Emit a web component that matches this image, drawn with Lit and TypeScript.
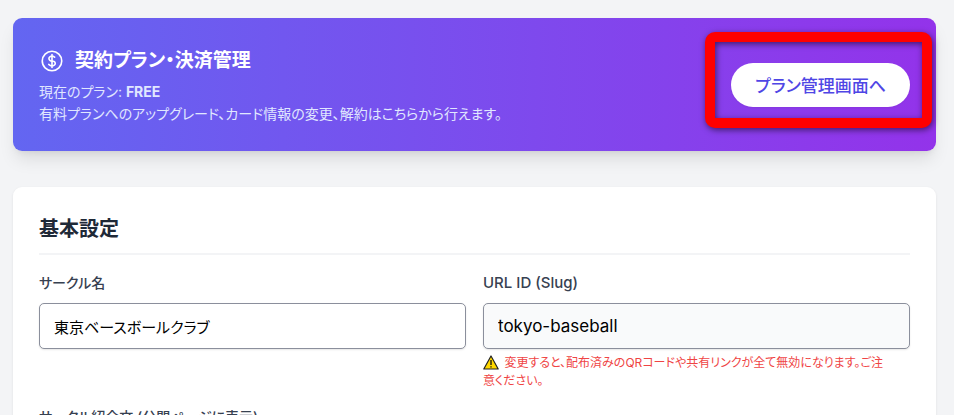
import { LitElement, html, css } from "lit";
import { customElement } from "lit/decorators.js";

@customElement("plan-banner")
class PlanBanner extends LitElement {
  static styles = css`
    :host {
      display: block;
    }
    .banner {
      display: flex;
      align-items: center;
      justify-content: space-between;
      gap: 16px;
      padding: 26px;
      border-radius: 9px;
      color: #fff;
      background: linear-gradient(to right, #6366f1, #9333ea);
      box-shadow: 0 11px 17px -3px rgb(0 0 0 / 0.1), 0 4px 7px -4px rgb(0 0 0 / 0.1);
    }
    .title {
      display: flex;
      align-items: center;
      gap: 10px;
      margin: 0 0 4px;
      font-size: 19px;
      line-height: 33px;
      font-weight: 700;
    }
    .icon {
      width: 26px;
      height: 26px;
      flex: none;
    }
    .text {
      margin: 0;
      font-size: 14px;
      line-height: 22px;
      color: #e0e7ff;
    }
    .action {
      position: relative;
      flex: none;
    }
    .button {
      display: block;
      height: 44px;
      padding: 0 24px;
      border: 0;
      border-radius: 22px;
      background: #fff;
      color: #4f46e5;
      font: inherit;
      font-size: 17px;
      font-weight: 500;
      font-feature-settings: inherit;
      box-shadow: 0 1px 2px rgb(0 0 0 / 0.05);
    }
    .highlight {
      position: absolute;
      inset: -31px -22px -21px -26px;
      border: 10px solid #f00;
      border-radius: 10px;
      pointer-events: none;
      filter: drop-shadow(1px 2px 3px rgb(0 0 0 / 0.55));
    }
  `;

  render() {
    return html`
      <section class="banner">
        <div>
          <h2 class="title">
            <svg class="icon" viewBox="0 0 24 24" fill="none" stroke="currentColor" stroke-width="1.5" stroke-linecap="round" stroke-linejoin="round" aria-hidden="true">
              <path d="M12 6v12m-3-2.818.879.659c1.171.879 3.07.879 4.242 0 1.172-.879 1.172-2.303 0-3.182C13.536 12.219 12.768 12 12 12c-.725 0-1.45-.22-2.003-.659-1.106-.879-1.106-2.303 0-3.182s2.9-.879 4.006 0l.415.33M21 12a9 9 0 1 1-18 0 9 9 0 0 1 18 0Z" />
            </svg>
            契約プラン・決済管理
          </h2>
          <p class="text">現在のプラン: <strong>FREE</strong></p>
          <p class="text">有料プランへのアップグレード、カード情報の変更、解約はこちらから行えます。</p>
        </div>
        <div class="action">
          <button class="button" type="button">プラン管理画面へ</button>
          <div class="highlight"></div>
        </div>
      </section>
    `;
  }
}

@customElement("basic-settings")
class BasicSettings extends LitElement {
  static styles = css`
    :host {
      display: block;
    }
    .card {
      padding: 26px;
      border-radius: 9px;
      background: #fff;
      box-shadow: 0 1px 3px rgb(0 0 0 / 0.08);
    }
    .heading {
      margin: 0 0 17px;
      padding-bottom: 8px;
      border-bottom: 2px solid #f3f4f6;
      font-size: 20px;
      line-height: 32px;
      font-weight: 700;
      color: #1f2937;
    }
    .grid {
      display: grid;
      grid-template-columns: 1fr 1fr;
      gap: 17px;
      margin-bottom: 16px;
    }
    .label {
      display: block;
      margin-bottom: 9px;
      font-size: 14px;
      line-height: 22px;
      font-weight: 500;
      color: #374151;
    }
    .label.latin {
      font-size: 15px;
    }
    .input {
      display: block;
      box-sizing: border-box;
      width: 100%;
      height: 46px;
      padding: 0 14px;
      border: 1px solid #8b8f9c;
      border-radius: 5px;
      background: #fff;
      color: #000;
      font: inherit;
      font-size: 15px;
      font-feature-settings: inherit;
      box-shadow: 0 1px 2px rgb(0 0 0 / 0.1);
    }
    .input.latin {
      font-size: 17px;
      background: #f9fafb;
    }
    .area {
      height: 110px;
      padding: 9px 14px;
    }
    .note {
      margin: 5px 0 0;
      padding-right: 20px;
      font-size: 12px;
      line-height: 18px;
      color: #ef4444;
    }
    .warn {
      width: 16px;
      height: 15px;
      margin-right: 2px;
      vertical-align: -3px;
    }
  `;

  render() {
    return html`
      <section class="card">
        <h2 class="heading">基本設定</h2>
        <div class="grid">
          <div>
            <label class="label" for="name">サークル名</label>
            <input class="input" id="name" type="text" value="東京ベースボールクラブ" />
          </div>
          <div>
            <label class="label latin" for="slug">URL ID (Slug)</label>
            <input class="input latin" id="slug" type="text" value="tokyo-baseball" />
            <p class="note">
              <svg class="warn" viewBox="0 0 16 15" role="img" aria-label="警告">
                <path d="M8 1 15.2 14H.8Z" fill="#ffd800" stroke="#222" stroke-width="1.2" stroke-linejoin="round" />
                <path d="M8 5v5M8 11.2v1.4" fill="none" stroke="#111" stroke-width="1.3" />
              </svg>
              変更すると、配布済みのQRコードや共有リンクが全て無効になります。ご注意ください。
            </p>
          </div>
        </div>
        <label class="label" for="intro">サークル紹介文 (公開ページに表示)</label>
        <textarea class="input area" id="intro"></textarea>
      </section>
    `;
  }
}

@customElement("app-root")
class AppRoot extends LitElement {
  static styles = css`
    :host {
      display: flex;
      flex-direction: column;
      gap: 36px;
      box-sizing: border-box;
      height: 100vh;
      overflow: hidden;
      padding: 18px 18px 0 13px;
      background: #f3f4f6;
      font-family: "Inter", "Noto Sans CJK JP", sans-serif;
      font-feature-settings: "palt";
    }
    .block {
      flex: none;
    }
  `;

  render() {
    return html`
      <plan-banner class="block"></plan-banner>
      <basic-settings class="block"></basic-settings>
    `;
  }
}
